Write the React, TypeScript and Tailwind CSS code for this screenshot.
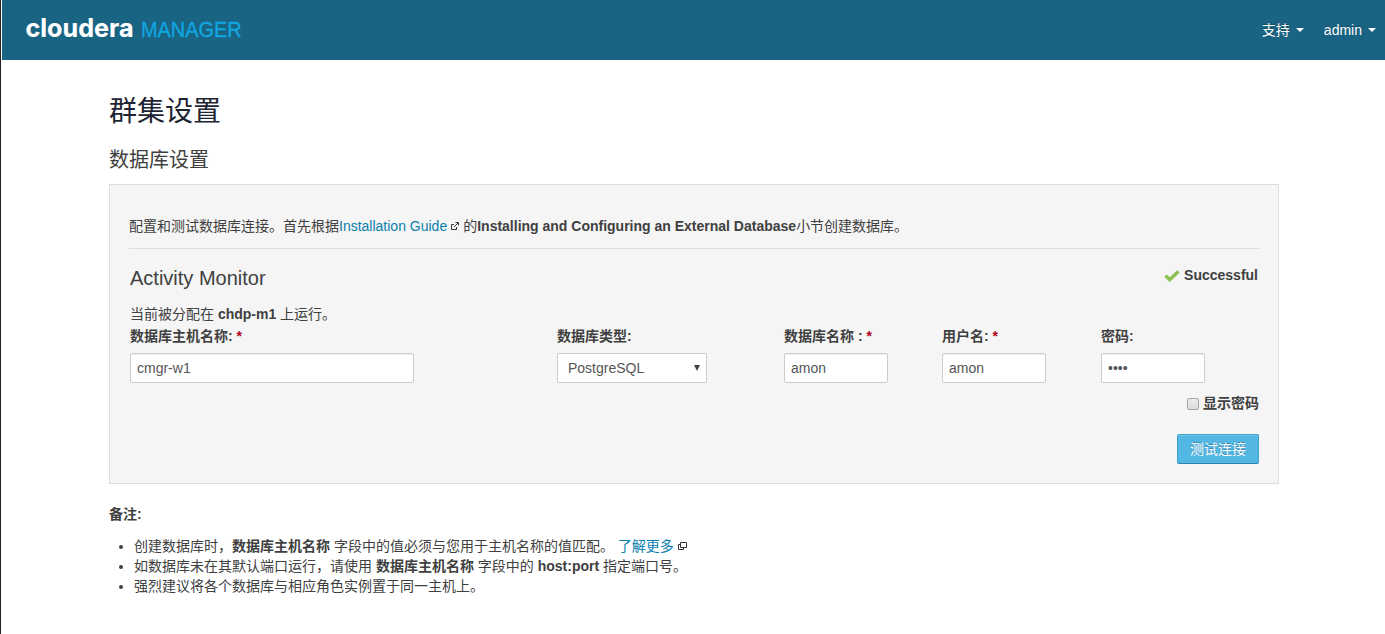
import type { ReactNode } from "react";

function Caret() {
  return (
    <svg width="8" height="4" viewBox="0 0 8 4" className="-mt-px ml-1.5">
      <path d="M0 0h8L4 4z" fill="#fff" />
    </svg>
  );
}

function Logo() {
  return (
    <svg width="240" height="60" viewBox="0 0 240 60" className="ml-[22px]">
      <text x="1.5" y="36.5" textLength="108" lengthAdjust="spacingAndGlyphs" fill="#fff" stroke="#fff" strokeWidth="0.15" fontFamily="Inter" fontWeight="700" fontSize="25.5">
        cloudera
      </text>
      <text x="117" y="36.7" textLength="100.5" lengthAdjust="spacingAndGlyphs" fill="#11a6e0" stroke="#11a6e0" strokeWidth="0.3" fontFamily="Liberation Sans" fontSize="22">
        MANAGER
      </text>
    </svg>
  );
}

function ExternalIcon() {
  return (
    <svg width="8" height="8" viewBox="0 0 8 8" fill="none" stroke="#333" className="mr-[4px] mb-px ml-[4px] inline-block align-baseline">
      <path d="M3 2.5H.5v5h5V5M4.5.5h3v3M7.3.7L3 5" />
    </svg>
  );
}

function WindowIcon() {
  return (
    <svg width="9" height="8" viewBox="0 0 9 8" fill="none" stroke="#333" className="mb-px ml-[4px] inline-block align-baseline">
      <path d="M2.5.5h6v5h-6zM2 2.5H.5v5h5V6" />
    </svg>
  );
}

function Field({ label, required, className, children }: { label: string; required?: boolean; className: string; children: ReactNode }) {
  return (
    <div className={className}>
      <div className="mb-[7px] h-5 font-bold whitespace-pre">
        {label}
        {required && <span className="text-[#b0001e]"> *</span>}
      </div>
      {children}
    </div>
  );
}

const inputClass =
  "block h-[30px] rounded-[2px] border border-[#ccc] bg-white px-1.5 text-[14px] leading-5 text-[#555] shadow-[inset_0_1px_1px_rgba(0,0,0,0.075)] outline-none";

export default function App() {
  return (
    <div className="h-[634px] overflow-hidden border-l border-[#222] bg-white pl-px font-['Liberation_Sans','Noto_Sans_CJK_SC',sans-serif] text-[14px] leading-5 text-[#404040]">
      <header className="flex h-[60px] items-center justify-between bg-[#1a6483] text-white">
        <Logo />
        <nav className="flex gap-5 pr-[9px] [text-shadow:0_-1px_0_rgba(0,0,0,0.25)]">
          <a className="flex items-center">支持<Caret /></a>
          <a className="flex items-center">admin<Caret /></a>
        </nav>
      </header>

      <main className="ml-[107px] w-[1170px] pt-8">
        <h1 className="text-[28px] leading-10 text-[#1d2433]">群集设置</h1>
        <h2 className="mt-[18px] text-[20px] leading-5">数据库设置</h2>

        <section className="mt-[14px] h-[300px] border border-[#ddd] bg-[#f5f5f5] px-[19px] pt-[31px]">
          <p className="h-[33px] border-b border-[#ddd]">
            配置和测试数据库连接。首先根据<a className="text-[#0b7fad]">Installation Guide</a>
            <ExternalIcon />的<b>Installing and Configuring an External Database</b>小节创建数据库。
          </p>
          <div className="flex justify-between pl-px">
            <h3 className="mt-[9px] text-[20px] leading-10">Activity Monitor</h3>
            <div className="mt-4 mr-px flex h-5 items-center gap-1 font-bold">
              <svg width="16" height="12" viewBox="0 0 16 12" className="mt-px">
                <path d="M.3 6.7L2.6 4.4 5.7 7.2 13.2.2 15.7 2.6 5.8 12z" fill="#8cc152" />
              </svg>
              Successful
            </div>
          </div>
          <p className="mt-[6px] pl-px">
            当前被分配在 <b>chdp-m1</b> 上运行。
          </p>
          <div className="mt-[2px] flex pl-px">
            <Field label="数据库主机名称:" required className="w-[427px]">
              <input className={`${inputClass} w-[284px]`} defaultValue="cmgr-w1" />
            </Field>
            <Field label="数据库类型:" className="w-[227px]">
              <div className="flex h-[30px] w-[150px] items-center justify-between rounded-[2px] border border-[#ccc] bg-white pr-[6px] pl-[10px] text-[#555]">
                PostgreSQL
                <svg width="6" height="6" viewBox="0 0 6 6">
                  <path d="M0 0h6L3 6z" fill="#444" />
                </svg>
              </div>
            </Field>
            <Field label="数据库名称 :" required className="w-[158px]">
              <input className={`${inputClass} w-[104px]`} defaultValue="amon" />
            </Field>
            <Field label="用户名:" required className="w-[159px]">
              <input className={`${inputClass} w-[104px]`} defaultValue="amon" />
            </Field>
            <Field label="密码:" className="w-[104px]">
              <input type="password" className={`${inputClass} w-[104px]`} defaultValue="amon" />
            </Field>
          </div>
          <label className="mt-[10px] flex h-5 items-center justify-end gap-1 font-bold">
            <input
              type="checkbox"
              className="mt-px h-3 w-3 appearance-none rounded-[2px] border border-[#a5a5a5] bg-linear-to-b from-[#ececec] to-[#dcdcdc]"
            />
            显示密码
          </label>
          <div className="mt-[21px] flex justify-end">
            <button className="h-[30px] w-[82px] rounded-[2px] border border-[#3fa1cd] border-b-[#2c83ab] bg-[#53b7e4] text-white shadow-[inset_0_1px_0_rgba(255,255,255,0.2)] [text-shadow:0_-1px_0_rgba(0,0,0,0.25)]">
              测试连接
            </button>
          </div>
        </section>

        <p className="mt-5 font-bold">备注:</p>
        <ul className="mt-3 ml-[25px] list-disc">
          <li>
            创建数据库时，<b>数据库主机名称</b> 字段中的值必须与您用于主机名称的值匹配。 <a className="text-[#0b7fad]">了解更多</a>
            <WindowIcon />
          </li>
          <li>
            如数据库未在其默认端口运行，请使用 <b>数据库主机名称</b> 字段中的 <b>host:port</b> 指定端口号。
          </li>
          <li>强烈建议将各个数据库与相应角色实例置于同一主机上。</li>
        </ul>
      </main>
    </div>
  );
}
